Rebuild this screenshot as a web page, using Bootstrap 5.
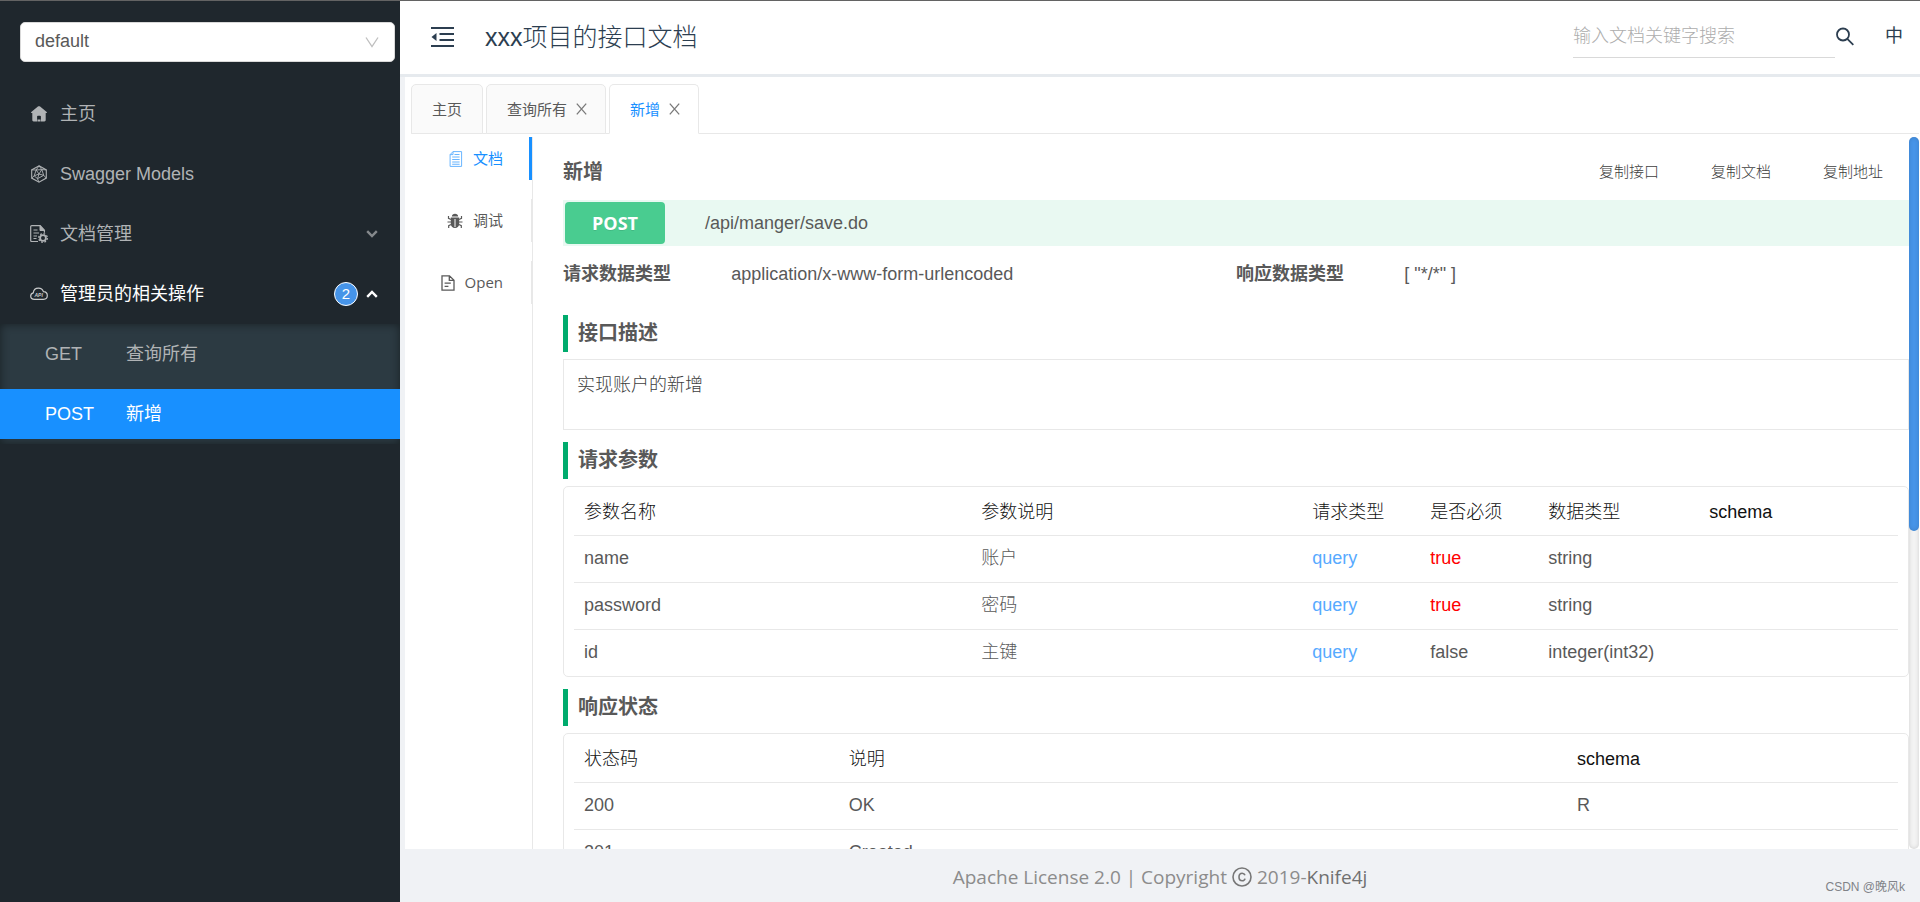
<!DOCTYPE html>
<html lang="zh-CN">
<head>
<meta charset="utf-8">
<meta name="viewport" content="width=device-width, initial-scale=1">
<title>xxx项目的接口文档</title>
<link href="https://cdn.jsdelivr.net/npm/bootstrap@5.3.0/dist/css/bootstrap.min.css" rel="stylesheet">
<style>
  :root { --line: #e8e8e8; --brand: #1890ff; --ink: #595959; --side: #1f272d; --page: #f0f2f5; }
  body { font-family: "Liberation Sans", "Noto Sans CJK SC", sans-serif; font-size: 18px; line-height: 27px; color: var(--ink); border-top: 1px solid #636363; background: var(--page); }
  a { color: inherit; text-decoration: none; }
  svg { display: block; flex: none; }
  .cjk-light { font-family: "Liberation Sans", "Noto Sans CJK SC Light", "Noto Sans CJK SC DemiLight", "Noto Sans CJK SC", sans-serif; font-weight: 300; }

  .side { width: 400px; background: var(--side); color: #b0b3b5; }
  .side-select { height: 40px; margin: 21px 5px 22px 20px; width: auto; padding: 0 44px 2px 14px; font-size: 18px; color: var(--ink); border-color: #d9d9d9; border-radius: 5px; background-size: 14px 14px; background-position: right 15px center;
    background-image: url("data:image/svg+xml,%3Csvg xmlns='http://www.w3.org/2000/svg' viewBox='0 0 14 14'%3E%3Cpath d='M1 2.500l6 9 6-9' fill='none' stroke='%23bfbfbf' stroke-width='1.300'/%3E%3C/svg%3E"); }
  .side-item { height: 50px; margin: 5px 0; padding: 0 22px 0 30px; gap: 12px; }
  .side-item.open { color: #fff; }
  .side-sub { background: #2c3a42; box-shadow: inset 0 0 10px rgba(0,0,0,.45); }
  .side-sub .side-item { padding-left: 45px; gap: 0; }
  .side-sub .side-item.active { background: var(--brand); color: #fff; }
  .verb { width: 81px; }
  .count { width: 24px; height: 24px; line-height: 22px; font-size: 15px; border: 1px solid #fff; background: #4694e8; color: #fff; }

  .top { height: 76px; border-bottom: 3px solid #e6eaee; background: #fff; padding: 0 17px 2px 30px; color: #2c3e50; }
  .top h1 { font-size: 25px; line-height: 36px; margin: 0 0 0 30px; }
  .find { width: 262px; height: 42px; border: 0; border-bottom: 1px solid #d9d9d9; border-radius: 0; padding: 0; font-size: 18px; background: none; }
  .find::placeholder { color: #adadad; opacity: 1; }
  .plain { border: 0; background: none; padding: 0; color: inherit; }
  .lang { margin-left: 30px; }

  .main-pane { background: #fff; margin-left: 5px; padding: 7px 1px 0 6px; }
  .doc-tabs { gap: 3px; border-bottom: 1px solid var(--line); font-size: 15px; margin-bottom: 3px; }
  .doc-tabs .nav-link { height: 50px; margin-bottom: -1px; padding: 0 20px; gap: 9px; border: 1px solid var(--line); border-radius: 5px 5px 0 0; background: #fafafa; color: var(--ink); }
  .doc-tabs .nav-link.active { background: #fff; border-bottom-color: #fff; color: var(--brand); }
  .doc-tabs .closable { padding-right: 18px; }

  .mode { width: 121px; gap: 19px; font-size: 15px; }
  .mode a { height: 43px; padding-right: 28px; gap: 10px; border-right: 1px solid var(--line); }
  .mode a.active { color: var(--brand); border-right: 3px solid var(--brand); padding-right: 26px; }
  .mode .latin { font-family: "Open Sans", sans-serif; }
  .doc { border-left: 1px solid var(--line); padding-left: 30px; }

  .doc-head { height: 63px; padding-top: 6px; }
  .doc-head h2, .sect { font-size: 20px; font-weight: 700; margin: 0; }
  .doc-head .plain { font-size: 15px; padding: 0 26px; color: #404040; }
  .route { height: 46px; background: #e9f9f2; padding: 2px; }
  .method { width: 100px; border-radius: 4px; background: #49cc90; color: #fff; font: 700 18px/42px "Open Sans", sans-serif; text-shadow: 0 1px 0 rgba(0,0,0,.1); margin-right: 40px; }
  .meta { padding: 15px 0 27px; }
  .sect { border-left: 5px solid #00ab6d; padding-left: 10px; line-height: 37px; margin-bottom: 7px; }
  .panel { border: 1px solid var(--line); margin-bottom: 12px; }
  .desc { min-height: 71px; padding: 12px 13px; color: #404040; }
  .grid-box { border-radius: 5px; padding: 0 10px; }
  .grid-box table { table-layout: fixed; margin: 0; color: var(--ink); }
  .grid-box th, .grid-box td { height: 47px; padding: 9px 10px; font-weight: 300; border-bottom: 1px solid var(--line); background: none; color: inherit; box-shadow: none; }
  .grid-box th { height: 48px; color: #111; }
  .grid-box tbody tr:last-child td { border-bottom: 0; }
  .grid-box .q { color: #57aaff; }
  .grid-box .req { color: #f00; }
  .c-narrow { width: 118px; }
  .c-type { width: 161px; }

  .rail { width: 10px; background: #f3f3f3; border-radius: 5px; box-shadow: inset 0 0 4px rgba(0,0,0,.15); }
  .thumb { background: #4694e8; border-radius: 5px; box-shadow: inset 0 0 4px rgba(0,0,0,.15); }
  .foot { height: 53px; font-family: "Open Sans", sans-serif; font-size: 19px; color: #8c8c8c; gap: 5px; padding-top: 3px; }
  .foot a { color: #707070; }
  .stamp { position: absolute; right: 15px; bottom: 6px; font: 12px/18px "Liberation Sans", "Noto Sans CJK SC", sans-serif; color: #808388; }
</style>
</head>
<body class="vh-100 overflow-hidden d-flex">

<nav class="side flex-shrink-0 d-flex flex-column" aria-label="接口菜单">
  <select class="form-select side-select" aria-label="分组"><option>default</option></select>
  <a href="#" class="side-item d-flex align-items-center">
    <svg width="18" height="18" viewBox="0 0 18 18" fill="currentColor"><path d="M9 1.200c.4 0 .8.200 1.100.4l6.600 5.300c.5.400.2 1.200-.4 1.200h-.6v7c0 .8-.5 1.300-1.300 1.300h-3.500V11.500c0-.5-.3-.8-.8-.8H7.900c-.5 0-.8.300-.8.800v4.900H3.600c-.8 0-1.300-.5-1.300-1.300v-7h-.6c-.6 0-.9-.8-.4-1.200l6.600-5.300c.3-.2.700-.4 1.100-.4z"/><path d="M7.500 14.500h3v2h-3z"/></svg>
    <span>主页</span>
  </a>
  <a href="#" class="side-item d-flex align-items-center">
    <svg width="18" height="18" viewBox="0 0 18 18" fill="none" stroke="currentColor"><path d="M9 .8l7.300 4.100v8.200L9 17.200l-7.300-4.100V4.900z" stroke-width="1.100"/><path d="M9 .8L6.200 5M1.700 4.900L6.200 5M16.300 4.900l-4.500-.3M9 .8l2.800 3.800M1.700 13.100l2.500-2.300M16.300 13.100l-2.600-2.800M9 17.200l-1.500-3.500M6.200 5l5.600-.4 1.900 5.700-6.200 3.400-3.300-2.900zM6.200 5L9 9l2.800-4.400M9 9l4.700 1.300M9 9l-1.500 4.700M9 9l-4.800 1.800" stroke-width=".9"/></svg>
    <span>Swagger Models</span>
  </a>
  <a href="#" class="side-item d-flex align-items-center">
    <svg width="18" height="18" viewBox="0 0 18 18" fill="none" stroke="currentColor"><path d="M8 16.500H1.800C1 16.500.7 16.100.7 15.500V1.700C.7 1 1.100.7 1.700.7h8.500l4.200 4.500v2.600" stroke-width="1.200"/><path d="M10 .7v4.800h4.600z" fill="currentColor"/><path d="M3.500 5h4M3.500 8h5.500M3.500 11h3.500M3.500 13.500h3" stroke-width="1.100"/><circle cx="13" cy="13" r="2.900" stroke-width="1.800"/><circle cx="13" cy="13" r="4.300" stroke-width="1.300" stroke-dasharray="1.700 1.677"/></svg>
    <span>文档管理</span>
    <svg class="ms-auto" width="12" height="8" viewBox="0 0 12 8" fill="none" stroke="#85898c" stroke-width="2.400"><path d="M1.200 1.200L6 6l4.800-4.800"/></svg>
  </a>
  <a href="#" class="side-item open d-flex align-items-center">
    <svg width="18" height="18" viewBox="0 0 18 18" fill="none" stroke="#c9cbcc"><path d="M4.500 14.300C2.300 14.300.7 12.900.7 11c0-1.600 1-2.800 2.600-3.200C3.600 5 5.800 3.200 8.500 3.200c2.300 0 4.200 1.300 4.900 3.400 2.200.1 3.900 1.800 3.900 3.900s-1.600 3.800-3.800 3.800z" stroke-width="1.200"/><text x="4.500" y="11.700" font-family="Liberation Sans" font-size="5" font-style="italic" font-weight="700" fill="#c9cbcc" stroke="none">API</text></svg>
    <span>管理员的相关操作</span>
    <span class="d-flex align-items-center gap-2 ms-auto">
      <span class="count rounded-circle text-center">2</span>
      <svg width="12" height="8" viewBox="0 0 12 8" fill="none" stroke="#fff" stroke-width="2.400"><path d="M1.200 6.800L6 2l4.800 4.800"/></svg>
    </span>
  </a>
  <div class="side-sub d-flex flex-column">
    <a href="#" class="side-item d-flex align-items-center"><span class="verb">GET</span><span>查询所有</span></a>
    <a href="#" class="side-item active d-flex align-items-center" aria-current="page"><span class="verb">POST</span><span>新增</span></a>
  </div>
</nav>

<div class="flex-grow-1 d-flex flex-column overflow-hidden position-relative">
  <header class="top flex-shrink-0 d-flex align-items-center">
    <button type="button" class="plain" aria-label="收起菜单">
      <svg width="25" height="22" viewBox="0 0 25 22" fill="none" stroke="currentColor" stroke-width="2"><path d="M1 2h23M9.500 8H24M9.500 14H24M1 20h23"/><path d="M6.500 7v8L1.500 11z" fill="currentColor" stroke="none"/></svg>
    </button>
    <h1 class="cjk-light">xxx项目的接口文档</h1>
    <input type="text" class="find form-control ms-auto cjk-light" placeholder="输入文档关键字搜索" aria-label="输入文档关键字搜索">
    <button type="button" class="plain" aria-label="搜索">
      <svg width="20" height="20" viewBox="0 0 20 20" fill="none" stroke="currentColor" stroke-width="1.800"><circle cx="8" cy="7.500" r="6"/><path d="M12.300 11.800l6 6"/></svg>
    </button>
    <button type="button" class="plain lang">中</button>
  </header>

  <main class="main-pane flex-grow-1 d-flex flex-column overflow-hidden">
    <nav class="doc-tabs nav flex-shrink-0">
      <a href="#" class="nav-link d-flex align-items-center">主页</a>
      <a href="#" class="nav-link closable d-flex align-items-center">查询所有
        <svg width="11" height="12" viewBox="0 0 11 12" fill="none" stroke="#7a7a7a" stroke-width="1.300"><path d="M.8.600l9.400 10.800M10.200.600L.8 11.400"/></svg></a>
      <a href="#" class="nav-link closable active d-flex align-items-center">新增
        <svg width="11" height="12" viewBox="0 0 11 12" fill="none" stroke="#7a7a7a" stroke-width="1.300"><path d="M.8.600l9.400 10.800M10.200.600L.8 11.400"/></svg></a>
    </nav>

    <div class="flex-grow-1 d-flex overflow-hidden">
      <nav class="mode flex-shrink-0 d-flex flex-column" aria-label="视图">
        <a href="#" class="active d-flex align-items-center justify-content-end">
          <svg width="14" height="16" viewBox="0 0 14 16" fill="none" stroke="#69b5ff"><path d="M4 .6h8.600v14.800H1.100V3.600zM4 .6v3H1.100" stroke-width="1"/><path d="M5.500 3.500h5M3.200 6h7.400M3.200 8.500h7.400M3.200 11h7.400M3.200 13.300h7.400" stroke-width="1.100"/></svg>
          <span>文档</span></a>
        <a href="#" class="d-flex align-items-center justify-content-end">
          <svg width="16" height="16" viewBox="0 0 16 16" fill="none" stroke="currentColor"><path d="M4.800 3.600C5 1.800 6.200.800 8 .8s3 1 3.200 2.800z" fill="currentColor" stroke="none"/><path d="M3.800 4.600h8.400v6.200c0 2.600-1.700 4.200-4.200 4.200s-4.200-1.600-4.200-4.200z" fill="currentColor" stroke="none"/><path d="M8 6v8" stroke="#fff" stroke-width="1"/><path d="M4 6.500L1.500 5.300V3M12 6.500l2.500-1.200V3M4 9H.5M12 9h3.500M4 11.500l-2.300 1.200V15M12 11.500l2.300 1.200V15" stroke-width="1.200"/></svg>
          <span>调试</span></a>
        <a href="#" class="d-flex align-items-center justify-content-end">
          <svg width="14" height="16" viewBox="0 0 14 16" fill="none" stroke="currentColor" stroke-width="1.300"><path d="M1 .8h7.500L13 5.200v10H1zM8.300.8v4.600H13M3.600 8.200h6.200M3.600 11.400h3.800"/></svg>
          <span class="latin">Open</span></a>
      </nav>

      <section class="doc flex-grow-1 overflow-hidden">
        <div class="doc-head d-flex align-items-center">
          <h2 class="me-auto">新增</h2>
          <button type="button" class="plain cjk-light">复制接口</button>
          <button type="button" class="plain cjk-light">复制文档</button>
          <button type="button" class="plain cjk-light">复制地址</button>
        </div>
        <div class="route d-flex align-items-center">
          <span class="method text-center">POST</span><span>/api/manger/save.do</span>
        </div>
        <div class="meta row g-0">
          <div class="col-6"><div class="row g-0"><strong class="col-3">请求数据类型</strong><span class="col-9">application/x-www-form-urlencoded</span></div></div>
          <div class="col-6"><div class="row g-0"><strong class="col-3">响应数据类型</strong><span class="col-9">[ "*/*" ]</span></div></div>
        </div>

        <h3 class="sect">接口描述</h3>
        <div class="panel desc cjk-light">实现账户的新增</div>

        <h3 class="sect">请求参数</h3>
        <div class="panel grid-box">
          <table class="table cjk-light">
            <colgroup><col style="width:30%"><col style="width:25%"><col class="c-narrow"><col class="c-narrow"><col class="c-type"><col></colgroup>
            <thead><tr><th>参数名称</th><th>参数说明</th><th>请求类型</th><th>是否必须</th><th>数据类型</th><th>schema</th></tr></thead>
            <tbody>
              <tr><td>name</td><td>账户</td><td class="q">query</td><td class="req">true</td><td>string</td><td></td></tr>
              <tr><td>password</td><td>密码</td><td class="q">query</td><td class="req">true</td><td>string</td><td></td></tr>
              <tr><td>id</td><td>主键</td><td class="q">query</td><td>false</td><td>integer(int32)</td><td></td></tr>
            </tbody>
          </table>
        </div>

        <h3 class="sect">响应状态</h3>
        <div class="panel grid-box">
          <table class="table cjk-light">
            <colgroup><col style="width:20%"><col style="width:55%"><col style="width:25%"></colgroup>
            <thead><tr><th>状态码</th><th>说明</th><th>schema</th></tr></thead>
            <tbody>
              <tr><td>200</td><td>OK</td><td>R</td></tr>
              <tr><td>201</td><td>Created</td><td></td></tr>
            </tbody>
          </table>
        </div>
      </section>
      <div class="rail flex-shrink-0"><div class="thumb" style="height:55.3%"></div></div>
    </div>
  </main>

  <footer class="foot flex-shrink-0 d-flex align-items-center justify-content-center">
    <span>Apache License 2.0 | Copyright</span>
    <svg width="20" height="20" viewBox="0 0 20 20" fill="none" stroke="#777" stroke-width="1.600"><circle cx="10" cy="10" r="9"/><path d="M13 8.300C12.600 7 11.600 6.200 10.200 6.200c-2 0-3.200 1.400-3.200 3.800s1.200 3.800 3.200 3.800c1.500 0 2.500-.8 2.800-2.200"/></svg>
    <span>2019-<a href="#">Knife4j</a></span>
    <span class="stamp">CSDN @晚风k</span>
  </footer>
</div>

<script src="https://cdn.jsdelivr.net/npm/bootstrap@5.3.0/dist/js/bootstrap.bundle.min.js"></script>
</body>
</html>
